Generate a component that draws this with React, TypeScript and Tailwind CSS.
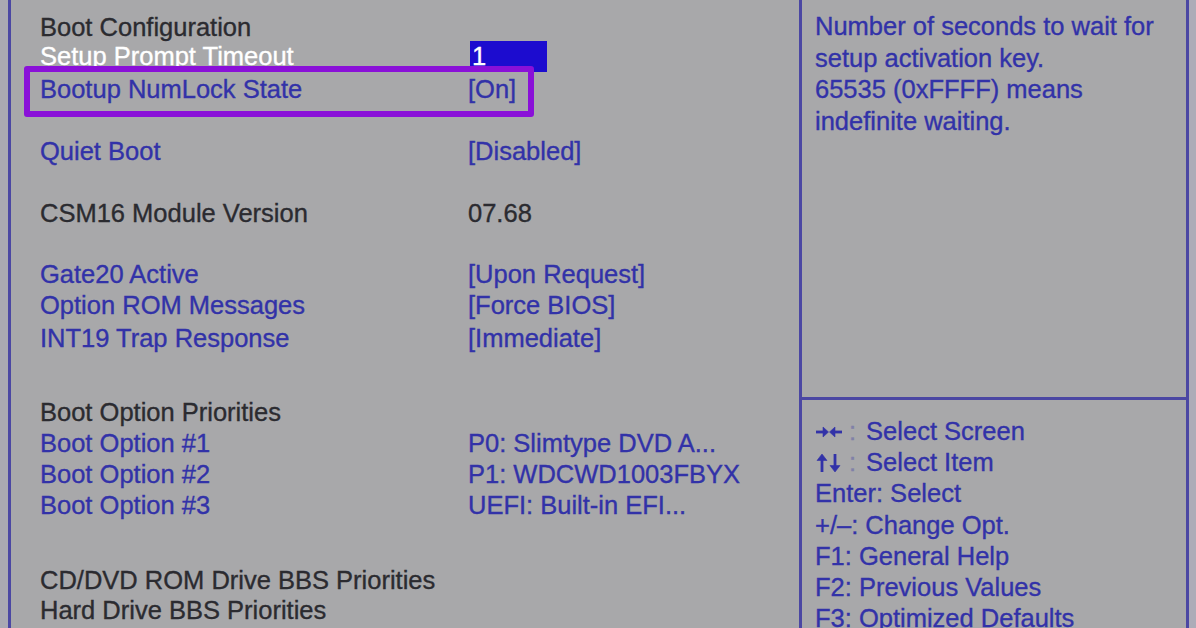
const font = { fontFamily: '"Liberation Sans", Arial, sans-serif' };

type RowProps = {
  label: string;
  value?: string;
  tone: "head" | "item" | "active";
  className?: string;
};

const Row = ({ label, value, tone, className = "" }: RowProps) => {
  const color =
    tone === "head"
      ? "text-[#2b2b30]"
      : tone === "active"
        ? "text-white"
        : "text-[#3232a8]";
  return (
    <div className={`flex h-[31px] items-center ${className}`}>
      <div className={`w-[428px] shrink-0 whitespace-nowrap ${color}`}>{label}</div>
      {value === "1" ? (
        <div className="ml-[2px] flex h-[31px] w-[77px] items-center bg-[#1c0ccf] pl-[2px] text-white">
          1
        </div>
      ) : (
        value && (
          <div className={`whitespace-nowrap ${tone === "head" ? "text-[#2b2b30]" : "text-[#3232a8]"}`}>
            {value}
          </div>
        )
      )}
    </div>
  );
};

const ArrowsLR = () => (
  <svg width="28" height="12" viewBox="0 0 28 12" className="mr-[6px]">
    <g fill="#3232a8" stroke="#3232a8" strokeWidth="2.8">
      <line x1="1" y1="6" x2="9" y2="6" />
      <line x1="19" y1="6" x2="27" y2="6" />
      <polygon points="8,1 13.5,6 8,11" strokeWidth="0.6" />
      <polygon points="20,1 14.5,6 20,11" strokeWidth="0.6" />
    </g>
  </svg>
);

const ArrowsUD = () => (
  <svg width="28" height="20" viewBox="0 0 28 20" className="mr-[6px]">
    <g fill="#3232a8" stroke="#3232a8" strokeWidth="2.8">
      <line x1="7" y1="6" x2="7" y2="19" />
      <line x1="20" y1="1" x2="20" y2="14" />
      <polygon points="2,7.5 7,1 12,7.5" strokeWidth="0.6" />
      <polygon points="15,12.5 20,19 25,12.5" strokeWidth="0.6" />
    </g>
  </svg>
);

export default function App() {
  return (
    <div
      className="relative flex h-[628px] w-[1196px] overflow-hidden bg-[#a8a8aa] text-[25.5px] [-webkit-text-stroke:0.35px]"
      style={font}
    >
      {/* outer gutter */}
      <div className="w-[8px] shrink-0 bg-[#aaa9b2]" />

      {/* main settings list */}
      <section className="w-[791px] shrink-0 border-l-[3px] border-[#4b47a3] pl-[29px] pt-[12px]">
        <Row label="Boot Configuration" tone="head" />
        <Row label="Setup Prompt Timeout" value="1" tone="active" className="-mt-[2px]" />
        <Row label="Bootup NumLock State" value="[On]" tone="item" className="mt-[2px]" />
        <Row label="Quiet Boot" value="[Disabled]" tone="item" className="mt-[31px]" />
        <Row label="CSM16 Module Version" value="07.68" tone="head" className="mt-[31px]" />
        <Row label="Gate20 Active" value="[Upon Request]" tone="item" className="mt-[30px]" />
        <Row label="Option ROM Messages" value="[Force BIOS]" tone="item" />
        <Row label="INT19 Trap Response" value="[Immediate]" tone="item" className="mt-[2px]" />
        <Row label="Boot Option Priorities" tone="head" className="mt-[43px]" />
        <Row label="Boot Option #1" value="P0: Slimtype DVD A..." tone="item" />
        <Row label="Boot Option #2" value="P1: WDCWD1003FBYX" tone="item" />
        <Row label="Boot Option #3" value="UEFI: Built-in EFI..." tone="item" />
        <Row label="CD/DVD ROM Drive BBS Priorities" tone="head" className="mt-[44px]" />
        <Row label="Hard Drive BBS Priorities" tone="head" className="-mt-[1px]" />
      </section>

      {/* help panel */}
      <aside className="flex w-[390px] shrink-0 flex-col border-x-[3px] border-[#4b47a3] text-[#3232a8]">
        <div className="h-[400px] shrink-0 border-b-[3px] border-[#4b47a3] pl-[13px] pt-[11px] leading-[31.5px]">
          <p>Number of seconds to wait for</p>
          <p>setup activation key.</p>
          <p>65535 (0xFFFF) means</p>
          <p>indefinite waiting.</p>
        </div>
        <div className="pl-[13px] pt-[16px] leading-[31.2px]">
          <p className="flex items-center">
            <ArrowsLR />
            <span className="mr-[10px] text-[#8080a8]">:</span>Select Screen
          </p>
          <p className="flex items-center">
            <ArrowsUD />
            <span className="mr-[10px] text-[#8080a8]">:</span>Select Item
          </p>
          <p>Enter: Select</p>
          <p>+/–: Change Opt.</p>
          <p>F1: General Help</p>
          <p>F2: Previous Values</p>
          <p>F3: Optimized Defaults</p>
        </div>
      </aside>

      <div className="flex-1 bg-[#adacb8]" />

      {/* highlight annotation */}
      <div className="absolute left-[24px] top-[66px] h-[51px] w-[510px] rounded-[3px] border-[6px] border-[#8a10d8]" />
    </div>
  );
}
